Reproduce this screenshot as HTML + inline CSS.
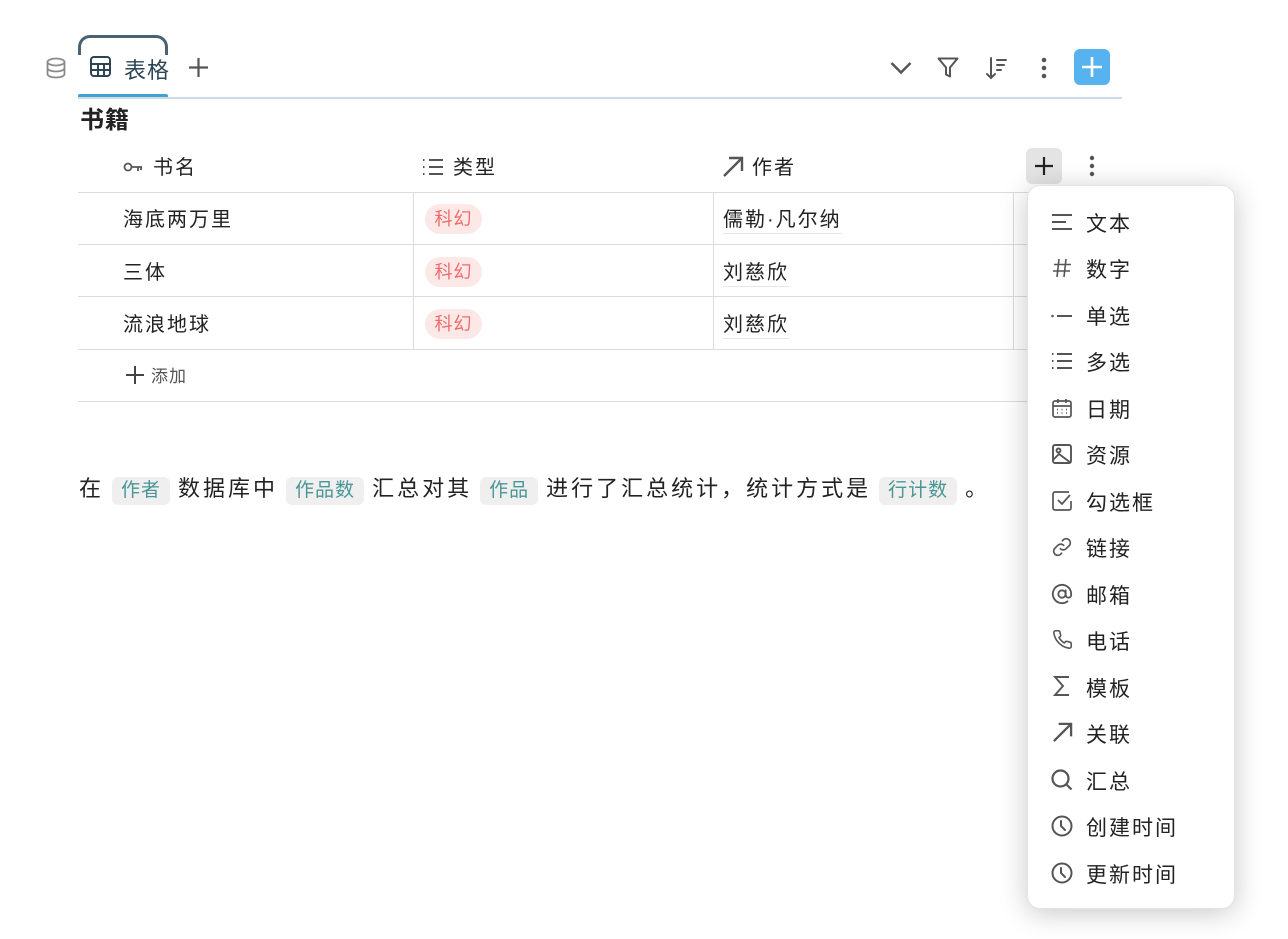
<!DOCTYPE html>
<html><head><meta charset="utf-8"><style>
*{margin:0;padding:0;box-sizing:border-box}
body{width:1288px;height:939px;background:#fff;position:relative;overflow:hidden;font-family:"Liberation Sans","Noto Sans CJK SC",sans-serif;color:#222}
.a{position:absolute}
.t{position:absolute;line-height:1;white-space:nowrap}
svg{position:absolute;overflow:visible}
.hl{position:absolute;left:78px;width:950px;height:1px;background:#dcdcdc}
.vl{position:absolute;width:1px;background:#dcdcdc;top:192px;height:157px}
.cell{font-size:20px;letter-spacing:2px;color:#222}
.tag{position:absolute;left:425px;width:57px;height:30px;border-radius:15px;background:#fde8e8;color:#f06b6b;font-size:18px;line-height:30px;text-align:center;letter-spacing:1px}
.au{font-size:20px;letter-spacing:2px;border-bottom:1px solid #e6e6e6;padding-bottom:3px}
.menu{position:absolute;left:1027px;top:185px;width:208px;height:724px;background:#fff;border-radius:13px;box-shadow:0 4px 28px rgba(0,0,0,.22);border:1px solid #e4e4e4}
.mi{position:absolute;left:58px;font-size:21px;letter-spacing:2px;color:#222;line-height:1}
.chip{display:inline-block;background:#efefef;color:#4a9696;font-size:19px;padding:0 9px 0 9px;border-radius:6px;line-height:28px;letter-spacing:1px;margin:0 8px}
</style></head><body>

<svg style="left:45px;top:57px" width="22" height="22" viewBox="0 0 22 22" fill="none" stroke="#8a8a8a" stroke-width="1.8"><ellipse cx="11" cy="5" rx="8.5" ry="3.5"/><path d="M2.5 5v12c0 2 3.8 3.5 8.5 3.5s8.5-1.5 8.5-3.5V5M2.5 11c0 2 3.8 3.5 8.5 3.5s8.5-1.5 8.5-3.5"/></svg>
<div class="a" style="left:78px;top:35px;width:90px;height:20px;border:3px solid #4a6170;border-bottom:none;border-radius:12px 12px 0 0"></div>
<svg style="left:90px;top:56px" width="21" height="21" viewBox="0 0 21 21" fill="none" stroke="#2d4455" stroke-width="2"><rect x="1" y="1" width="19" height="19" rx="3"/><path d="M1 8h19M1 14h19M8 8v12M14 8v12"/></svg>
<div class="t" style="left:124px;top:60px;font-size:22px;color:#2d4455;letter-spacing:1px">表格</div>
<svg style="left:188px;top:57px" width="21" height="21" viewBox="0 0 21 21" stroke="#555" stroke-width="2.2"><path d="M10.5 1v19M1 10.5h19"/></svg>
<div class="a" style="left:78px;top:94px;width:90px;height:4px;background:#3ea2d2;border-radius:2px"></div>
<div class="a" style="left:78px;top:97px;width:1044px;height:2px;background:#cddbe3"></div>

<svg style="left:890px;top:61px" width="22" height="14" viewBox="0 0 22 14" fill="none" stroke="#555" stroke-width="2.4"><path d="M1.5 2l9.5 9.5L20.5 2"/></svg>
<svg style="left:937px;top:57px" width="22" height="22" viewBox="0 0 22 22" fill="none" stroke="#555" stroke-width="2" stroke-linejoin="round"><path d="M1.5 1.5h19l-7.5 9v9l-4-2v-7z"/></svg>
<svg style="left:985px;top:56px" width="24" height="24" viewBox="0 0 24 24" fill="none" stroke="#555" stroke-width="2" stroke-linecap="round"><path d="M6 2v20M2 18l4 4 4-4M12 4h9M12 9h7M12 14h4"/></svg>
<svg style="left:1040px;top:56px" width="8" height="24" viewBox="0 0 8 24" fill="#555"><circle cx="4" cy="4" r="2.3"/><circle cx="4" cy="12" r="2.3"/><circle cx="4" cy="20" r="2.3"/></svg>
<div class="a" style="left:1074px;top:49px;width:36px;height:36px;background:#57b3ef;border-radius:6px"></div>
<svg style="left:1082px;top:57px" width="20" height="20" viewBox="0 0 20 20" stroke="#fff" stroke-width="2.6"><path d="M10 0v20M0 10h20"/></svg>

<div class="t" style="left:80px;top:109px;font-size:24px;font-weight:bold;color:#222;letter-spacing:1px">书籍</div>

<svg style="left:123px;top:161px" width="20" height="12" viewBox="0 0 20 12" fill="none" stroke="#555" stroke-width="1.8"><circle cx="5" cy="6" r="3.5"/><path d="M8.5 6H19M15 6v4M18 6v3"/></svg>
<div class="t cell" style="left:153px;top:158px">书名</div>
<svg style="left:422px;top:158px" width="22" height="18" viewBox="0 0 22 18" stroke="#555" stroke-width="2"><path d="M7 2h14M7 9h14M7 16h14"/><path d="M1 2h1.5M1 9h1.5M1 16h1.5" stroke-width="2"/></svg>
<div class="t cell" style="left:453px;top:158px">类型</div>
<svg style="left:722px;top:156px" width="22" height="22" viewBox="0 0 22 22" fill="none" stroke="#555" stroke-width="2.4"><path d="M2 20L20 2M7 2h13v13"/></svg>
<div class="t cell" style="left:752px;top:158px">作者</div>
<div class="a" style="left:1026px;top:148px;width:36px;height:36px;background:#e4e4e4;border-radius:6px"></div>
<svg style="left:1035px;top:157px" width="18" height="18" viewBox="0 0 18 18" stroke="#222" stroke-width="2.2"><path d="M9 0v18M0 9h18"/></svg>
<svg style="left:1089px;top:155px" width="6" height="22" viewBox="0 0 6 22" fill="#555"><circle cx="3" cy="3" r="2.2"/><circle cx="3" cy="11" r="2.2"/><circle cx="3" cy="19" r="2.2"/></svg>

<div class="hl" style="top:192px"></div>
<div class="hl" style="top:244px"></div>
<div class="hl" style="top:296px"></div>
<div class="hl" style="top:349px"></div>
<div class="hl" style="top:401px"></div>
<div class="vl" style="left:413px"></div>
<div class="vl" style="left:713px"></div>
<div class="vl" style="left:1013px"></div>

<div class="t cell" style="left:123px;top:210px">海底两万里</div>
<div class="t cell" style="left:123px;top:263px">三体</div>
<div class="t cell" style="left:123px;top:315px">流浪地球</div>
<div class="tag" style="top:204px">科幻</div>
<div class="tag" style="top:257px">科幻</div>
<div class="tag" style="top:309px">科幻</div>
<div class="t au" style="left:723px;top:210px">儒勒·凡尔纳</div>
<div class="t au" style="left:723px;top:263px">刘慈欣</div>
<div class="t au" style="left:723px;top:315px">刘慈欣</div>

<svg style="left:126px;top:366px" width="18" height="18" viewBox="0 0 18 18" stroke="#444" stroke-width="2"><path d="M9 0v18M0 9h18"/></svg>
<div class="t" style="left:151px;top:368px;font-size:17px;color:#555;letter-spacing:1px">添加</div>

<div class="t" style="left:79px;top:475px;font-size:22px;letter-spacing:3px;line-height:28px;color:#222">在<span class="chip">作者</span>数据库中<span class="chip">作品数</span>汇总对其<span class="chip">作品</span>进行了汇总统计，统计方式是<span class="chip">行计数</span>。</div>

<div class="menu">
<svg style="left:23px;top:28px" width="22" height="16" viewBox="0 0 22 16" stroke="#555" stroke-width="2"><path d="M1 1h20M1 8h14M1 15h20"/></svg>
<div class="mi" style="top:28px">文本</div>
<svg style="left:25px;top:72px" width="18" height="20" viewBox="0 0 18 20" stroke="#555" stroke-width="1.6"><path d="M6 1L4 19M13 1l-2 18M1 6.5h17M0 13h17"/></svg>
<div class="mi" style="top:74px">数字</div>
<svg style="left:23px;top:127px" width="22" height="6" viewBox="0 0 22 6" stroke="#555" stroke-width="2"><path d="M6 3h15"/><circle cx="1.5" cy="3" r="1.3" fill="#555" stroke="none"/></svg>
<div class="mi" style="top:121px">单选</div>
<svg style="left:23px;top:166px" width="22" height="18" viewBox="0 0 22 18" stroke="#555" stroke-width="2"><path d="M6 2h15M6 9h15M6 16h15M1 2h1.5M1 9h1.5M1 16h1.5"/></svg>
<div class="mi" style="top:167px">多选</div>
<svg style="left:24px;top:212px" width="20" height="20" viewBox="0 0 20 20" fill="none" stroke="#555" stroke-width="1.7"><rect x="1" y="3" width="18" height="16" rx="2"/><path d="M1 8h18M6 1v4M14 1v4"/><path d="M5 11.5h1M9.5 11.5h1M14 11.5h1M5 15h1M9.5 15h1M14 15h1" stroke-width="1.4"/></svg>
<div class="mi" style="top:214px">日期</div>
<svg style="left:24px;top:258px" width="20" height="20" viewBox="0 0 20 20" fill="none" stroke="#555" stroke-width="1.9"><rect x="1" y="1" width="18" height="18" rx="2"/><circle cx="6.5" cy="6.5" r="2"/><path d="M1 16l6-6 12 9"/></svg>
<div class="mi" style="top:260px">资源</div>
<svg style="left:24px;top:305px" width="20" height="20" viewBox="0 0 20 20" fill="none" stroke="#555" stroke-width="1.7"><path d="M19 10v7a2 2 0 0 1-2 2H3a2 2 0 0 1-2-2V3a2 2 0 0 1 2-2h14"/><path d="M6 9l4 4 8-9"/></svg>
<div class="mi" style="top:307px">勾选框</div>
<svg style="left:24px;top:351px" width="20" height="20" viewBox="0 0 24 24" fill="none" stroke="#555" stroke-width="2" stroke-linecap="round"><path d="M10 14a5 5 0 0 0 7 0l4-4a5 5 0 0 0-7-7l-1.5 1.5"/><path d="M14 10a5 5 0 0 0-7 0l-4 4a5 5 0 0 0 7 7l1.5-1.5"/></svg>
<div class="mi" style="top:353px">链接</div>
<svg style="left:23px;top:397px" width="22" height="22" viewBox="0 0 24 24" fill="none" stroke="#555" stroke-width="2" stroke-linecap="round"><circle cx="12" cy="12" r="4"/><path d="M16 8v5a3 3 0 0 0 6 0v-1a10 10 0 1 0-4 8"/></svg>
<div class="mi" style="top:400px">邮箱</div>
<svg style="left:24px;top:443px" width="21" height="21" viewBox="0 0 24 24" fill="none" stroke="#555" stroke-width="1.8" stroke-linejoin="round"><path d="M22 16.9v3a2 2 0 0 1-2.2 2 19.8 19.8 0 0 1-8.6-3.1 19.5 19.5 0 0 1-6-6A19.8 19.8 0 0 1 2.1 4.2 2 2 0 0 1 4.1 2h3a2 2 0 0 1 2 1.7c.1 1 .4 1.9.7 2.8a2 2 0 0 1-.5 2.1L8 9.900a16 16 0 0 0 6 6l1.3-1.3a2 2 0 0 1 2.1-.4c.9.3 1.8.6 2.8.7a2 2 0 0 1 1.7 2z"/></svg>
<div class="mi" style="top:446px">电话</div>
<svg style="left:26px;top:490px" width="16" height="20" viewBox="0 0 16 20" fill="none" stroke="#555" stroke-width="1.9"><path d="M15 1H1l8 9-8 9h14"/></svg>
<div class="mi" style="top:493px">模板</div>
<svg style="left:24px;top:536px" width="21" height="21" viewBox="0 0 22 22" fill="none" stroke="#555" stroke-width="2.4"><path d="M2 20L20 2M7 2h13v13"/></svg>
<div class="mi" style="top:539px">关联</div>
<svg style="left:23px;top:583px" width="22" height="22" viewBox="0 0 22 22" fill="none" stroke="#555" stroke-width="2.2"><circle cx="9.5" cy="9.5" r="8"/><path d="M15.5 15.5L20.5 20.5"/></svg>
<div class="mi" style="top:586px">汇总</div>
<svg style="left:23px;top:629px" width="22" height="22" viewBox="0 0 22 22" fill="none" stroke="#555" stroke-width="2" stroke-linecap="round"><circle cx="11" cy="11" r="9.5"/><path d="M10 6v5l4 4"/></svg>
<div class="mi" style="top:632px">创建时间</div>
<svg style="left:23px;top:676px" width="22" height="22" viewBox="0 0 22 22" fill="none" stroke="#555" stroke-width="2" stroke-linecap="round"><circle cx="11" cy="11" r="9.5"/><path d="M10 6v5l4 4"/></svg>
<div class="mi" style="top:679px">更新时间</div>
</div>

</body></html>
